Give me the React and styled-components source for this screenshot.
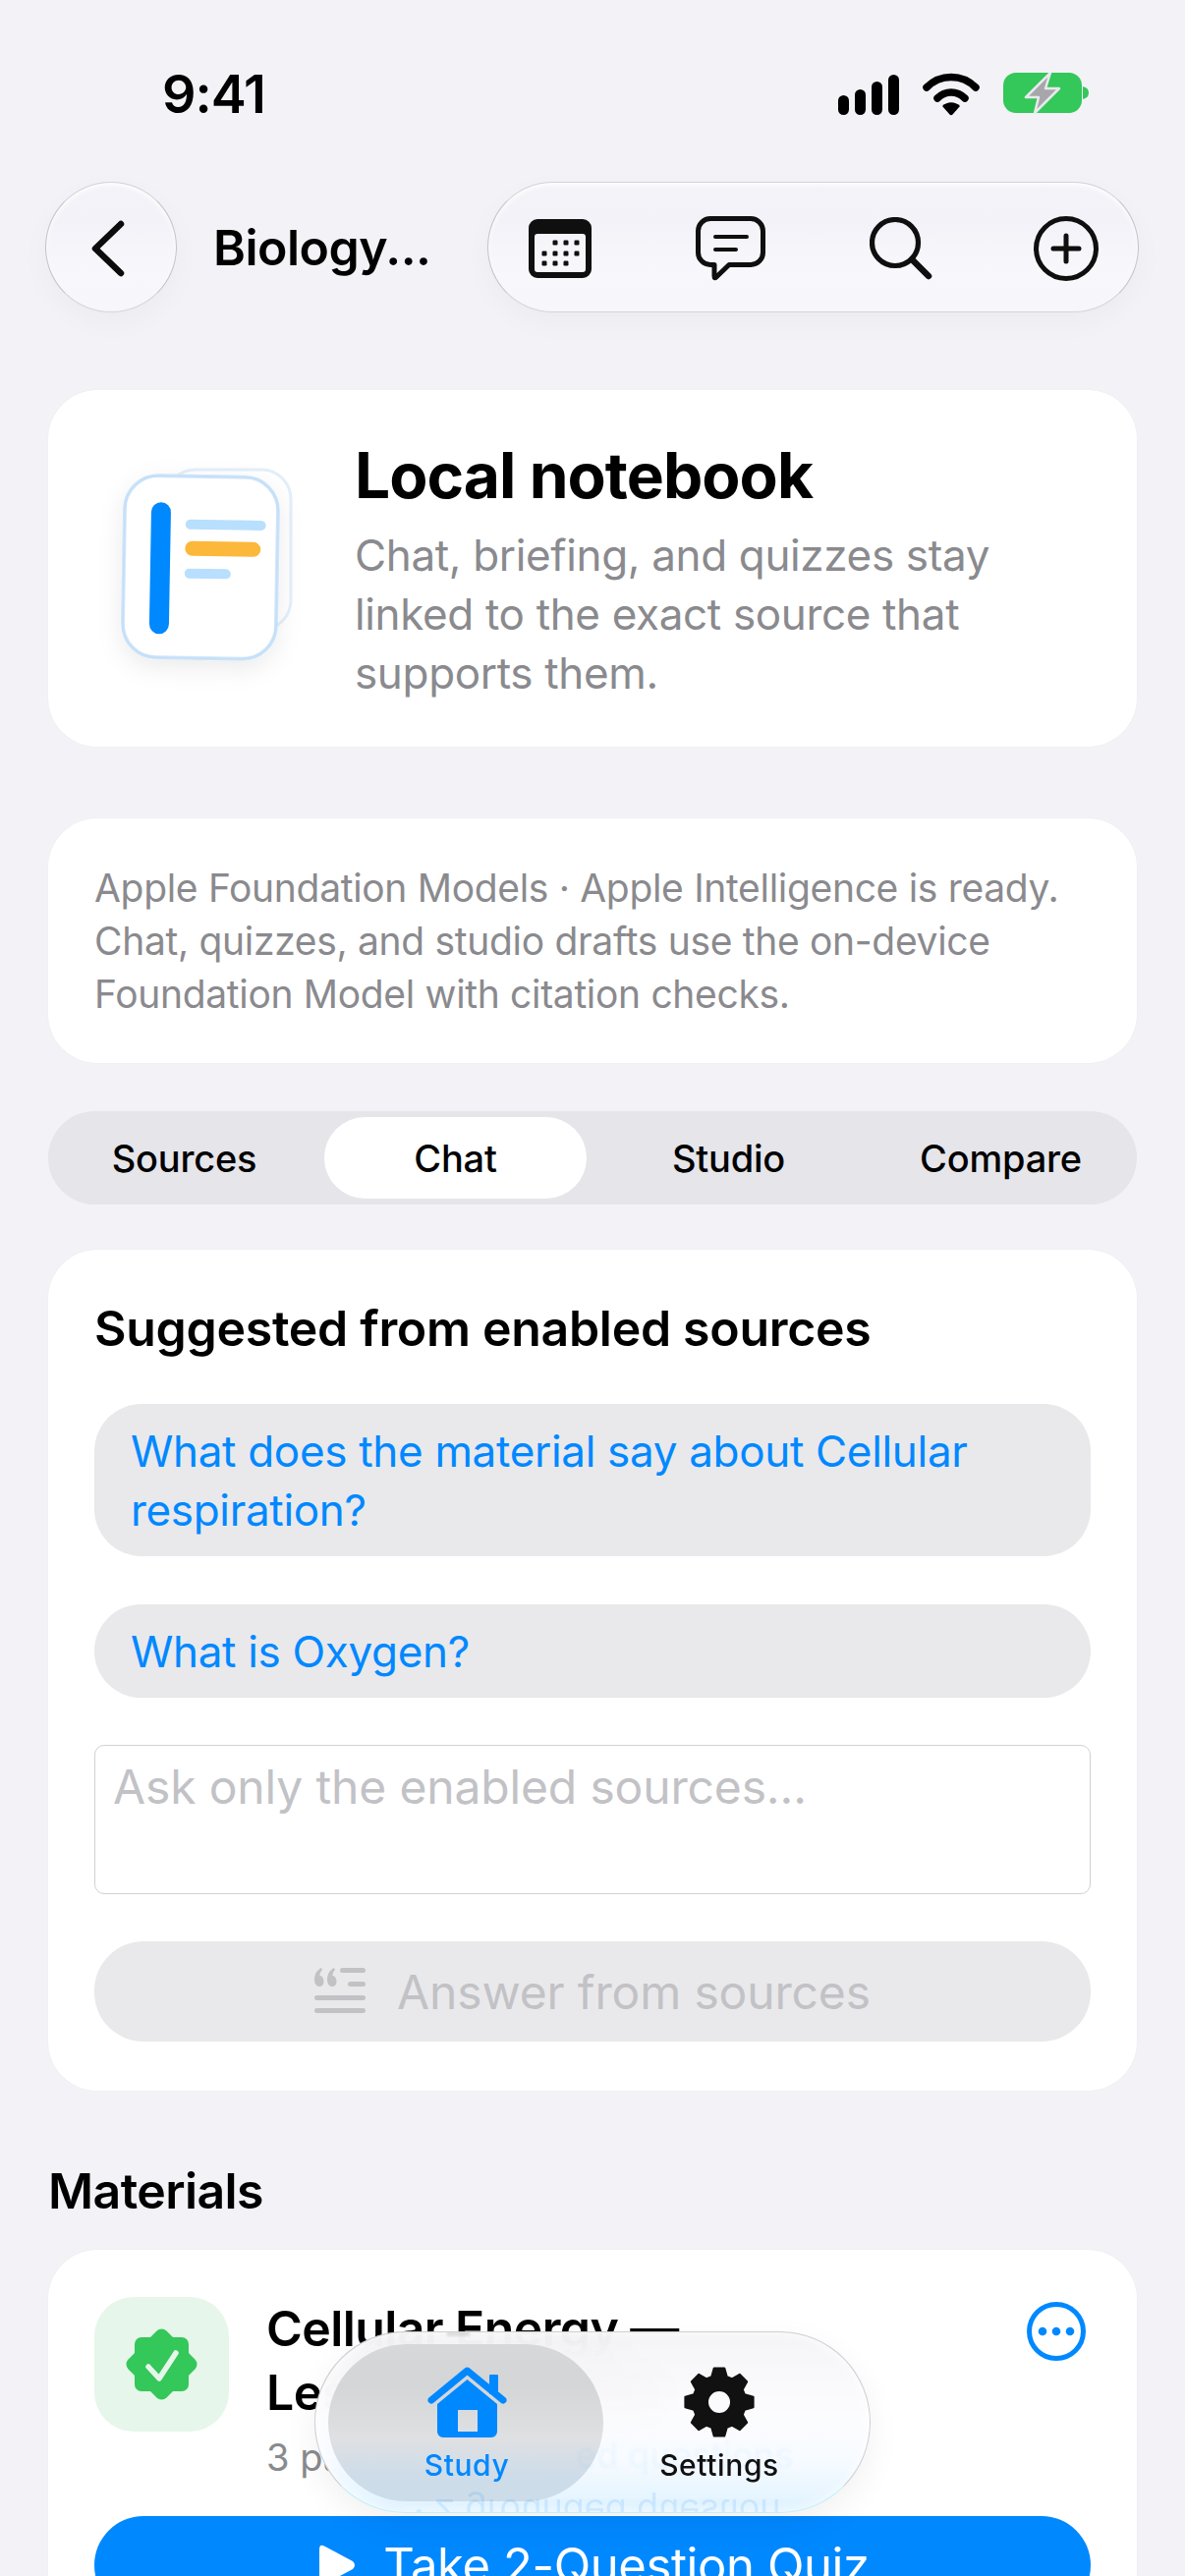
import React from "react";
import styled, { createGlobalStyle } from "styled-components";

const Global = createGlobalStyle`
  html, body { margin: 0; padding: 0; background: #f2f2f7; }
  * { box-sizing: border-box; }
  body { font-family: Inter, "Noto Sans", "Liberation Sans", sans-serif; color: #000; -webkit-font-smoothing: antialiased; }
`;

const Page = styled.div`
  position: relative;
  width: 1206px;
  height: 2622px;
  overflow: hidden;
  background: #f2f2f7;
`;
const Scroll = styled.div`
  padding: 0 49px;
  display: flex;
  flex-direction: column;
`;
const StatusBar = styled.div`
  height: 185px;
  margin: 0 -49px;
  padding: 69px 97px 0 165px;
  display: flex;
  justify-content: space-between;
  align-items: flex-start;
`;
const Time = styled.div`
  font-size: 54px;
  line-height: 54px;
  font-weight: 600;
  letter-spacing: -1px;
`;
const StatusIcons = styled.div`
  display: flex;
  align-items: flex-start;
  gap: 24px;
  padding-top: 7px;
`;
const Nav = styled.div`
  display: flex;
  align-items: center;
  height: 133px;
  margin: 0 -3px;
`;
const glass = `
  background: linear-gradient(180deg, #f3f3f8 0%, #f2f2f8 30%, #f8f8fc 70%, #f7f7fb 100%);
  border: 1.5px solid #d4d4d8;
  border-right-color: #c4c4c8;
  border-left-color: #c4c4c8;
  box-shadow: 0 10px 30px rgba(0,0,0,.03), inset 0 3px 5px rgba(255,255,255,.9);
`;
const BackButton = styled.div`
  ${glass}
  width: 134px;
  height: 133px;
  border-radius: 50%;
  display: flex;
  align-items: center;
  justify-content: center;
  padding: 3px 6px 0 0;
  flex: none;
`;
const NavTitle = styled.div`
  margin-left: 37px;
  width: 279px;
  font-size: 50px;
  font-weight: 600;
  letter-spacing: -.5px;
  flex: none;
`;
const ActionPill = styled.div`
  ${glass}
  width: 663px;
  height: 133px;
  border-radius: 67px;
  display: flex;
  align-items: center;
  gap: 106px;
  padding: 3px 0 0 41px;
  & > svg:last-child { margin-left: -3px; }
`;
const Card = styled.section`
  background: #fff;
  border-radius: 50px;
  box-shadow: 0 0 2px rgba(0,0,0,.04);
`;
const HeroCard = styled(Card)`
  margin-top: 79px;
  height: 363px;
  padding: 50px 60px 0 61px;
  display: flex;
`;
const LogoSlot = styled.div`
  width: 251px;
  flex: none;
  padding: 28px 0 0 14px;
`;
const HeroTitle = styled.h1`
  margin: 0;
  font-size: 64px;
  line-height: 74px;
  font-weight: 700;
  letter-spacing: -.95px;
`;
const HeroText = styled.p`
  margin: 14px 0 0;
  font-size: 44px;
  line-height: 60px;
  color: #8a8a8e;
  letter-spacing: -.35px;
  max-width: 700px;
`;
const InfoCard = styled(Card)`
  margin-top: 73px;
  height: 249px;
  padding: 44px 47px 0;
  font-size: 39px;
  line-height: 54px;
  color: #8a8a8e;
  letter-spacing: -.32px;
`;
const Segments = styled.div`
  margin-top: 49px;
  height: 95px;
  border-radius: 48px;
  background: #e5e5ea;
  display: grid;
  grid-template-columns: repeat(4, 1fr);
  padding: 6px 0;
  align-items: stretch;
`;
const Segment = styled.div`
  display: flex;
  align-items: center;
  justify-content: center;
  font-size: 38px;
  font-weight: 500;
  letter-spacing: -.2px;
  border-radius: 42px;
  background: ${p => (p.$active ? "#fff" : "transparent")};
  margin: 0 ${p => (p.$active ? "6px" : 0)} 0 ${p => (p.$active ? "4px" : 0)};
`;
const ChatCard = styled(Card)`
  margin-top: 46px;
  padding: 50px 47px 0;
  height: 856px;
  display: flex;
  flex-direction: column;
`;
const SectionTitle = styled.h2`
  margin: 0;
  font-size: 50px;
  line-height: 60px;
  font-weight: 600;
  letter-spacing: -.3px;
`;
const Chip = styled.div`
  background: #e9e9eb;
  border-radius: 48px;
  color: #0088ff;
  font-size: 44px;
  line-height: 60px;
  letter-spacing: -.32px;
  padding: 18px 37px 17px;
  margin-top: ${p => p.$mt}px;
`;
const Input = styled.div`
  margin-top: 48px;
  height: 152px;
  border: 1.5px solid #d1d1d6;
  border-radius: 10px;
  padding: 12px 18px;
  font-size: 48px;
  line-height: 60px;
  color: #c2c2c6;
  letter-spacing: -.15px;
`;
const AnswerButton = styled.div`
  margin-top: 48px;
  height: 102px;
  border-radius: 50px;
  background: #e9e9eb;
  color: #c2c2c6;
  font-size: 48px;
  letter-spacing: -.15px;
  display: flex;
  align-items: center;
  justify-content: center;
  gap: 32px;
`;
const MaterialsTitle = styled(SectionTitle)`
  margin-top: 72px;
  letter-spacing: -.6px;
`;
const MaterialCard = styled(Card)`
  margin-top: 30px;
  padding: 48px 47px;
  height: 500px;
`;
const MaterialRow = styled.div`
  display: flex;
  align-items: flex-start;
`;
const BadgeTile = styled.div`
  width: 137px;
  height: 137px;
  border-radius: 40px;
  background: #e6f6ea;
  display: flex;
  align-items: center;
  justify-content: center;
  flex: none;
`;
const MaterialBody = styled.div`
  margin-left: 38px;
  flex: 1;
`;
const MaterialTitle = styled.div`
  font-size: 50px;
  line-height: 65px;
  font-weight: 600;
  letter-spacing: -.6px;
`;
const MaterialMeta = styled.div`
  font-size: 38px;
  line-height: 50px;
  color: #8a8a8e;
  margin-top: 8px;
`;
const MoreSlot = styled.div`
  margin: 5px 5px 0 0;
  flex: none;
`;
const QuizButton = styled.div`
  margin-top: 35px;
  height: 100px;
  border-radius: 50px;
  background: #0088ff;
  color: #fff;
  font-size: 49px;
  display: flex;
  align-items: center;
  justify-content: center;
  gap: 28px;
  letter-spacing: -.4px;
  padding-left: 3px;
`;
const TabBar = styled.nav`
  position: absolute;
  left: 320px;
  top: 2373px;
  width: 566px;
  height: 185px;
  border-radius: 93px;
  overflow: hidden;
  display: flex;
  align-items: stretch;
  padding: 13px 14px;
  border: 1.5px solid #cfcfd2;
  border-bottom-color: #c6eef8;
  background: linear-gradient(180deg, rgba(244,244,246,.94) 0%, rgba(252,252,254,.96) 45%, rgba(247,251,255,.96) 70%, rgba(222,242,255,.97) 100%);
  backdrop-filter: blur(20px);
  box-shadow: inset 0 0 10px rgba(255,255,255,.9);
`;
const BarShadow = styled.div`
  position: absolute;
  left: 320px;
  top: 2373px;
  width: 566px;
  height: 185px;
  border-radius: 93px;
  box-shadow: 0 12px 34px rgba(0,0,0,.06);
`;
const ActivePill = styled.div`
  position: absolute;
  left: 13px;
  top: 12px;
  width: 280px;
  height: 160px;
  border-radius: 80px;
  background: linear-gradient(180deg, #d7d8d9 0%, #d4d5d6 25%, #dfe0e2 60%, #cddce9 85%, #ccdce8 100%);
`;
const Reflection = styled.div`
  position: absolute;
  white-space: nowrap;
  pointer-events: none;
  transform: scaleY(-1);
  font-size: ${p => p.$size}px;
  font-weight: ${p => p.$weight || 400};
  color: ${p => p.$color};
  left: ${p => p.$x}px;
  top: ${p => p.$y}px;
  filter: blur(${p => p.$blur || 0.6}px);
`;
const Ghost = styled.div`
  position: absolute;
  left: 265px;
  top: 103px;
  white-space: nowrap;
  font-size: 36px;
  font-weight: 500;
  color: rgba(10,132,255,.045);
  filter: blur(1.4px);
`;
const Tab = styled.div`
  position: relative;
  width: ${p => p.$w}px;
  flex: none;
  display: flex;
  flex-direction: column;
  align-items: center;
  padding-top: 22px;
  color: ${p => (p.$active ? "#0088ff" : "#111")};
`;
const TabLabel = styled.div`
  margin-top: 10px;
  font-size: 30px;
  line-height: 36px;
  font-weight: 500;
  letter-spacing: .6px;
`;

const Signal = () => (
  <svg width="62" height="41" viewBox="0 0 62 41">
    <rect x="0" y="21" width="11" height="20" rx="5.5" />
    <rect x="17" y="15" width="11" height="26" rx="5.5" />
    <rect x="34" y="7" width="11" height="34" rx="5.5" />
    <rect x="51" y="0" width="11" height="41" rx="5.5" />
  </svg>
);
const Wifi = () => (
  <svg width="58" height="44" viewBox="0 0 58 44" fill="none" style={{ marginTop: -2 }}>
    <path d="M4 15 C18 1 40 1 54 15" stroke="#000" strokeWidth="7.5" strokeLinecap="round" />
    <path d="M15 26 C23 18 35 18 43 26" stroke="#000" strokeWidth="7.5" strokeLinecap="round" />
    <path d="M20 34 C25 29 33 29 38 34 L30.5 42.5 C29.5 43.5 28.5 43.5 27.5 42.5 Z" fill="#000" />
  </svg>
);
const Battery = () => (
  <svg width="88" height="42" viewBox="0 0 88 42" style={{ marginTop: -2 }}>
    <rect x="0" y="0" width="80" height="41" rx="13" fill="#34c759" />
    <path d="M81 14 C85 15 87 17 87 20.5 C87 24 85 26 81 27 Z" fill="#34c759" />
    <path d="M48 0 L23 25 L36 25 L32 41 L57 16 L43 16 Z" fill="#a6a6ab" stroke="#e9e9ee" strokeWidth="2.5" strokeLinejoin="round" />
  </svg>
);
const Chevron = () => (
  <svg width="36" height="58" viewBox="0 0 36 58" fill="none">
    <path d="M31 4 L5 29 L31 54" stroke="#0c0c0c" strokeWidth="6.5" strokeLinecap="round" strokeLinejoin="round" />
  </svg>
);
const CalendarIcon = () => {
  const dots = [[27, 24], [38, 24], [49, 24], [16, 35], [27, 35], [38, 35], [49, 35], [16, 45], [27, 45], [38, 45]];
  return (
    <svg width="64" height="60" viewBox="0 0 64 60">
      <path fillRule="evenodd" fill="#0f0f0f" d="M9 0 H55 A9 9 0 0 1 64 9 V51 A9 9 0 0 1 55 60 H9 A9 9 0 0 1 0 51 V9 A9 9 0 0 1 9 0 Z M9 15 A3 3 0 0 0 6 18 V51 A3 3 0 0 0 9 54 H55 A3 3 0 0 0 58 51 V18 A3 3 0 0 0 55 15 Z" />
      {dots.map(([x, y]) => <rect key={`${x}-${y}`} x={x - 2.5} y={y - 2.5} width="5" height="5" rx="1.2" fill="#0f0f0f" />)}
    </svg>
  );
};
const BubbleIcon = () => (
  <svg width="71" height="67" viewBox="0 0 71 67" fill="none" stroke="#0f0f0f" strokeLinecap="round" strokeLinejoin="round">
    <path d="M15 2.5 H56 A12.5 12.5 0 0 1 68.5 15 V37 A12.5 12.5 0 0 1 56 49.5 H34 L21 62 Q19 64 19 61 V49.5 H15 A12.5 12.5 0 0 1 2.5 37 V15 A12.5 12.5 0 0 1 15 2.5 Z" strokeWidth="5" />
    <path d="M20 21 H52 M20 34 H41" strokeWidth="4" />
  </svg>
);
const SearchIcon = () => (
  <svg width="64" height="64" viewBox="0 0 64 64" fill="none" stroke="#0f0f0f" strokeLinecap="round">
    <circle cx="26" cy="26" r="23.5" strokeWidth="5.2" />
    <path d="M43 43 L60 60" strokeWidth="6.5" />
  </svg>
);
const PlusIcon = () => (
  <svg width="66" height="66" viewBox="0 0 66 66" fill="none" stroke="#0f0f0f" strokeLinecap="round">
    <circle cx="33" cy="33" r="30.5" strokeWidth="5" />
    <path d="M33 20 V46 M20 33 H46" strokeWidth="5" />
  </svg>
);
const Logo = () => (
  <svg width="190" height="215" viewBox="0 0 190 215" fill="none" style={{ overflow: "visible" }}>
    <defs>
      <filter id="soft" x="-30%" y="-30%" width="160%" height="160%">
        <feDropShadow dx="0" dy="8" stdDeviation="12" floodColor="#000" floodOpacity=".08" />
      </filter>
    </defs>
    <rect x="45" y="3" width="127" height="163" rx="30" fill="#fff" stroke="#e3effb" strokeWidth="3" />
    <g transform="rotate(1 85 100)">
      <rect x="2" y="10" width="156" height="185" rx="34" fill="#fff" stroke="#c5e0f8" strokeWidth="3.5" filter="url(#soft)" />
      <rect x="29" y="37" width="20" height="134" rx="10" fill="#0088ff" />
      <rect x="64" y="54" width="82" height="10" rx="5" fill="#b8dffd" />
      <rect x="64" y="76" width="77" height="15" rx="7.5" fill="#fbb83a" />
      <rect x="64" y="104" width="47" height="10" rx="5" fill="#b8dffd" />
    </g>
  </svg>
);
const QuoteIcon = () => (
  <svg width="52" height="48" viewBox="0 0 52 48" fill="#c2c2c6">
    <path d="M0 12 C0 6 3 2 7 0 L8 2 C6 4 5.5 6 5.5 8 C8 8 9.5 11 9.5 14 C9.5 17 7.5 19 5 19 C2 19 0 16 0 12 Z" />
    <path d="M13 12 C13 6 16 2 20 0 L21 2 C19 4 18.5 6 18.5 8 C21 8 22.5 11 22.5 14 C22.5 17 20.5 19 18 19 C15 19 13 16 13 12 Z" />
    <rect x="26" y="0" width="26" height="5" rx="2.5" />
    <rect x="34" y="14" width="18" height="5" rx="2.5" />
    <rect x="0" y="28" width="52" height="5" rx="2.5" />
    <rect x="0" y="41" width="52" height="5" rx="2.5" />
  </svg>
);
const VerifiedBadge = () => (
  <svg width="73" height="73" viewBox="0 0 73 73">
    <rect x="9" y="9" width="55" height="55" rx="7" fill="#34c759" />
    <rect x="9" y="9" width="55" height="55" rx="7" fill="#34c759" transform="rotate(45 36.5 36.5)" />
    <path d="M23 39 L34 51 L51 25" fill="none" stroke="#e6f6ea" strokeWidth="5.5" strokeLinecap="round" strokeLinejoin="round" />
  </svg>
);
const MoreIcon = () => (
  <svg width="60" height="60" viewBox="0 0 60 60" fill="#0088ff">
    <circle cx="30" cy="30" r="27.5" fill="none" stroke="#0088ff" strokeWidth="5" />
    <circle cx="16" cy="30" r="4.3" />
    <circle cx="30" cy="30" r="4.3" />
    <circle cx="44" cy="30" r="4.3" />
  </svg>
);
const PlayIcon = () => (
  <svg width="38" height="42" viewBox="0 0 38 42" fill="#fff">
    <path d="M1 5 Q1 -1 6 1.5 L35 17 Q39 21 35 25 L6 40.5 Q1 43 1 37 Z" />
  </svg>
);
const HomeIcon = () => (
  <svg width="81" height="72" viewBox="0 0 81 72" fill="#0088ff">
    <path d="M4 34 L40.5 4 L77 34" fill="none" stroke="#0088ff" strokeWidth="7" strokeLinecap="round" strokeLinejoin="round" />
    <rect x="63" y="8" width="9" height="20" rx="1" />
    <path fillRule="evenodd" d="M40.5 13 L71 38 V66 A6 6 0 0 1 65 72 H16 A6 6 0 0 1 10 66 V38 Z M31 44 V66 H51 V44 Z" />
  </svg>
);
function gearPath() {
  const cx = 36, cy = 36, teeth = 8;
  const r1 = 35, r2 = 27;
  let d = "";
  for (let i = 0; i < teeth; i++) {
    const a = (i * 2 * Math.PI) / teeth - Math.PI / 2;
    const pts = [[r2, -0.29], [r1, -0.15], [r1, 0.15], [r2, 0.29]];
    pts.forEach(([r, off]) => {
      const x = cx + r * Math.cos(a + off);
      const y = cy + r * Math.sin(a + off);
      d += `${d ? "L" : "M"}${x.toFixed(2)} ${y.toFixed(2)} `;
    });
  }
  return d + "Z";
}
const GearIcon = () => (
  <svg width="72" height="72" viewBox="0 0 72 72">
    <path d={`${gearPath()} M36 24 A12 12 0 1 0 36 48 A12 12 0 1 0 36 24 Z`} fillRule="evenodd" fill="#111" stroke="#111" strokeWidth="2" strokeLinejoin="round" />
  </svg>
);

export default function App() {
  return (
    <Page>
      <Global />
      <Scroll>
        <StatusBar>
          <Time>9:41</Time>
          <StatusIcons>
            <Signal />
            <Wifi />
            <Battery />
          </StatusIcons>
        </StatusBar>
        <Nav>
          <BackButton><Chevron /></BackButton>
          <NavTitle>Biology...</NavTitle>
          <ActionPill>
            <CalendarIcon />
            <BubbleIcon />
            <SearchIcon />
            <PlusIcon />
          </ActionPill>
        </Nav>
        <HeroCard>
          <LogoSlot><Logo /></LogoSlot>
          <div>
            <HeroTitle>Local notebook</HeroTitle>
            <HeroText>Chat, briefing, and quizzes stay linked to the exact source that supports them.</HeroText>
          </div>
        </HeroCard>
        <InfoCard>
          Apple Foundation Models · Apple Intelligence is ready. Chat, quizzes, and studio drafts use the on-device Foundation Model with citation checks.
        </InfoCard>
        <Segments>
          <Segment>Sources</Segment>
          <Segment $active>Chat</Segment>
          <Segment>Studio</Segment>
          <Segment>Compare</Segment>
        </Segments>
        <ChatCard>
          <SectionTitle>Suggested from enabled sources</SectionTitle>
          <Chip $mt={47}>What does the material say about Cellular respiration?</Chip>
          <Chip $mt={49}>What is Oxygen?</Chip>
          <Input>Ask only the enabled sources...</Input>
          <AnswerButton><QuoteIcon />Answer from sources</AnswerButton>
        </ChatCard>
        <MaterialsTitle>Materials</MaterialsTitle>
        <MaterialCard>
          <MaterialRow>
            <BadgeTile><VerifiedBadge /></BadgeTile>
            <MaterialBody>
              <MaterialTitle>Cellular Energy —<br />Lesson Overview</MaterialTitle>
              <MaterialMeta>3 pages · 2 grounded questions</MaterialMeta>
            </MaterialBody>
            <MoreSlot><MoreIcon /></MoreSlot>
          </MaterialRow>
          <QuizButton><PlayIcon />Take 2-Question Quiz</QuizButton>
        </MaterialCard>
      </Scroll>
      <BarShadow />
      <TabBar>
        <ActivePill />
        <Ghost>ed questions</Ghost>
        <Reflection $size={50} $weight={600} $x={130} $y={-44} $color="rgba(0,0,0,.10)" $blur={1.2}>Energy —</Reflection>
        <Reflection $size={36} $x={100} $y={161} $color="rgba(10,132,255,.12)">· 2 grounded question</Reflection>
        <Tab $active $w={280}>
          <HomeIcon />
          <TabLabel>Study</TabLabel>
        </Tab>
        <Tab $w={234}>
          <GearIcon />
          <TabLabel>Settings</TabLabel>
        </Tab>
      </TabBar>
    </Page>
  );
}
